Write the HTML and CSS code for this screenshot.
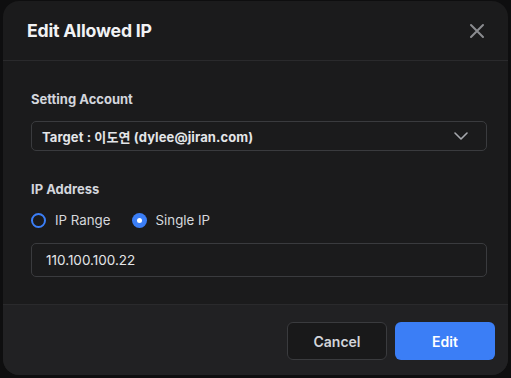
FILE: index.html
```html
<!DOCTYPE html>
<html lang="ko">
<head>
<meta charset="utf-8">
<title>Edit Allowed IP</title>
<link rel="stylesheet" href="styles.css">
</head>
<body>
<div class="modal">
  <div class="modal-header">
    <h1 class="modal-title">Edit Allowed IP</h1>
    <button class="close-btn" aria-label="Close">
      <svg width="16" height="16" viewBox="0 0 16 16"><path d="M2 2L14 14M14 2L2 14" stroke="#8b8c90" stroke-width="2" stroke-linecap="round"/></svg>
    </button>
  </div>
  <div class="modal-body">
    <div class="field-label">Setting Account</div>
    <div class="select">
      <span class="select-text">Target : 이도연 (dylee@jiran.com)</span>
      <svg class="chevron" width="14" height="8" viewBox="0 0 14 8"><path d="M1 1L7 7L13 1" fill="none" stroke="#a6a8ad" stroke-width="1.6" stroke-linecap="round" stroke-linejoin="round"/></svg>
    </div>
    <div class="field-label second">IP Address</div>
    <div class="radio-row">
      <label class="radio"><span class="radio-dot"></span><span>IP Range</span></label>
      <label class="radio"><span class="radio-dot checked"></span><span>Single IP</span></label>
    </div>
    <div class="input">110.100.100.22</div>
  </div>
  <div class="modal-footer">
    <button class="btn btn-cancel">Cancel</button>
    <button class="btn btn-primary">Edit</button>
  </div>
</div>
</body>
</html>
```
FILE: styles.css
```css
* { box-sizing: border-box; }
html, body { margin: 0; padding: 0; }
body {
  background: #0e0e0f;
  font-family: Inter, "Noto Sans CJK KR", sans-serif;
  width: 511px;
  height: 378px;
  overflow: hidden;
}
.modal {
  margin: 1px 0 0 3px;
  width: 505px;
  height: 374px;
  background: #1b1b1c;
  border-radius: 16px;
  overflow: hidden;
  display: flex;
  flex-direction: column;
}
.modal-header {
  height: 60px;
  border-bottom: 1px solid #2a2a2c;
  display: flex;
  align-items: center;
  justify-content: space-between;
  padding: 0 23px 0 24px;
}
.modal-title {
  margin: 0;
  font-size: 17.7px;
  font-weight: 700;
  color: #f1f2f4;
  letter-spacing: -0.2px;
}
.close-btn {
  background: none;
  border: 0;
  padding: 0;
  width: 16px;
  height: 16px;
  display: flex;
}
.modal-body {
  padding: 29px 21px 27px 28px;
  border-bottom: 1px solid #2a2a2c;
}
.field-label {
  font-size: 13px;
  line-height: 18px;
  font-weight: 700;
  color: #d3d6dc;
  margin-bottom: 13px;
}
.field-label.second { margin-top: 29px; }
.select {
  height: 30px;
  border: 1px solid #3a3b3e;
  border-radius: 5px;
  display: flex;
  align-items: center;
  justify-content: space-between;
  padding: 0 18px 0 10px;
}
.select-text {
  font-size: 13px;
  font-weight: 700;
  color: #e3e5e8;
  letter-spacing: 0.1px;
}
.radio-row {
  display: flex;
  gap: 21px;
  height: 18px;
  align-items: center;
}
.radio {
  display: flex;
  align-items: center;
  gap: 9px;
  font-size: 13.3px;
  color: #d6d8dc;
}
.radio-dot {
  width: 15px;
  height: 15px;
  border-radius: 50%;
  border: 2px solid #3b7ef6;
}
.radio-dot.checked {
  background: #3b7ef6;
  border: 0;
  display: flex;
  align-items: center;
  justify-content: center;
}
.radio-dot.checked::after {
  content: "";
  width: 5px;
  height: 5px;
  border-radius: 50%;
  background: #fff;
}
.input {
  margin-top: 14px;
  height: 34px;
  border: 1px solid #3a3b3e;
  border-radius: 5px;
  display: flex;
  align-items: center;
  padding: 0 14px;
  font-size: 13.5px;
  color: #e3e5e8;
}
.modal-footer {
  flex: 1;
  background: #212123;
  display: flex;
  justify-content: flex-end;
  align-items: flex-start;
  gap: 8px;
  padding: 17px 13px 0 0;
}
.btn {
  width: 100px;
  height: 38px;
  border-radius: 6px;
  font-family: inherit;
  font-size: 14px;
  font-weight: 600;
}
.btn-cancel {
  background: #19191a;
  border: 1px solid #3a3b3e;
  color: #d3d5da;
}
.btn-primary {
  background: #3b7ef6;
  border: 0;
  color: #ffffff;
}
```
